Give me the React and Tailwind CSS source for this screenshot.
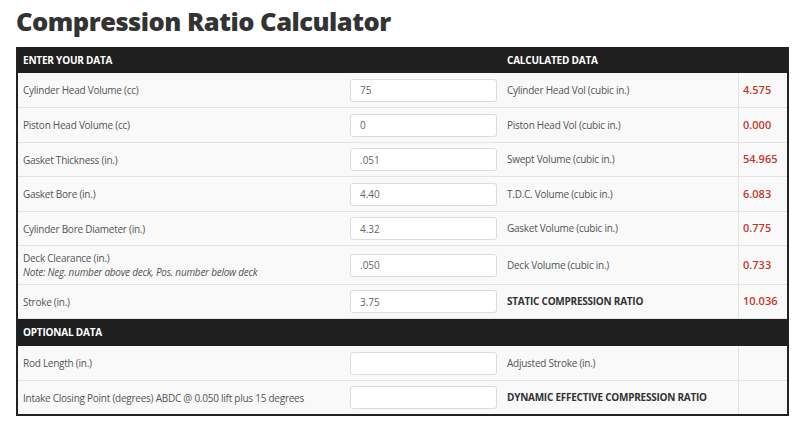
const inputs = [
  { label: 'Cylinder Head Volume (cc)', value: '75', calc: 'Cylinder Head Vol (cubic in.)', result: '4.575', h: 'h-[35px]' },
  { label: 'Piston Head Volume (cc)', value: '0', calc: 'Piston Head Vol (cubic in.)', result: '0.000', h: 'h-[35px]' },
  { label: 'Gasket Thickness (in.)', value: '.051', calc: 'Swept Volume (cubic in.)', result: '54.965', h: 'h-[34px]' },
  { label: 'Gasket Bore (in.)', value: '4.40', calc: 'T.D.C. Volume (cubic in.)', result: '6.083', h: 'h-[35px]' },
  { label: 'Cylinder Bore Diameter (in.)', value: '4.32', calc: 'Gasket Volume (cubic in.)', result: '0.775', h: 'h-[34px]' },
  {
    label: 'Deck Clearance (in.)',
    note: 'Note: Neg. number above deck, Pos. number below deck',
    value: '.050',
    calc: 'Deck Volume (cubic in.)',
    result: '0.733',
    h: 'h-[39px]',
  },
  { label: 'Stroke (in.)', value: '3.75', calc: 'STATIC COMPRESSION RATIO', result: '10.036', bold: true, h: 'h-[34px]' },
];

const optional = [
  { label: 'Rod Length (in.)', value: '', calc: 'Adjusted Stroke (in.)', result: '', h: 'h-[35px]' },
  {
    label: 'Intake Closing Point (degrees) ABDC @ 0.050 lift plus 15 degrees',
    value: '',
    calc: 'DYNAMIC EFFECTIVE COMPRESSION RATIO',
    result: '',
    bold: true,
    h: 'h-[33px] border-b-0',
  },
];

function SectionHeader({ left, right, h }) {
  return (
    <div className={`grid grid-cols-[324px_163px_1fr] items-center bg-[#1f1f1f] text-white text-[10px] tracking-[-0.2px] font-bold ${h}`}>
      <div className="pl-[5px]">{left}</div>
      <div></div>
      <div className="pl-[2px]">{right}</div>
    </div>
  );
}

function Row({ row }) {
  return (
    <div className={`grid grid-cols-[324px_163px_233px_1fr] bg-[#f9f9f9] border-b border-[#e3e3e3] ${row.h}`}>
      <div className="flex flex-col justify-center pl-[5px] text-[10px] tracking-[-0.25px] text-[#555] leading-[14px]">
        <span>{row.label}</span>
        {row.note && <span className="italic">{row.note}</span>}
      </div>
      <div className="flex items-center pl-[8px] pr-[7px]">
        <input
          readOnly
          value={row.value}
          className="w-[147px] h-[23px] bg-white border border-[#dcdcdc] rounded-[3px] px-[9px] text-[10px] text-[#666] outline-none"
          style={{ fontFamily: 'inherit' }}
        />
      </div>
      <div
        className={`flex items-center pl-[2px] text-[10px] tracking-[-0.25px] ${row.bold ? 'font-bold text-[#333]' : 'text-[#555]'}`}
      >
        {row.calc}
      </div>
      <div className="flex items-center pl-[4px] border-l border-[#e3e3e3] text-[11px] font-semibold text-[#c0392b]">
        {row.result}
      </div>
    </div>
  );
}

export default function App() {
  return (
    <div className="w-[800px] h-[424px] bg-white overflow-hidden" style={{ fontFamily: '"Open Sans", "Liberation Sans", sans-serif' }}>
      <h1 className="pl-[16px] pt-[3px] h-[47px] text-[25.5px] font-extrabold text-[#333] tracking-[-0.5px] leading-[36px]">
        Compression Ratio Calculator
      </h1>
      <div className="ml-[16px] w-[773px] border-x-2 border-b-2 border-[#222]">
        <SectionHeader left="ENTER YOUR DATA" right="CALCULATED DATA" h="h-[26px]" />
        {inputs.map((row) => (
          <Row key={row.label} row={row} />
        ))}
        <SectionHeader left="OPTIONAL DATA" right="" h="h-[27px]" />
        {optional.map((row) => (
          <Row key={row.label} row={row} />
        ))}
      </div>
    </div>
  );
}
